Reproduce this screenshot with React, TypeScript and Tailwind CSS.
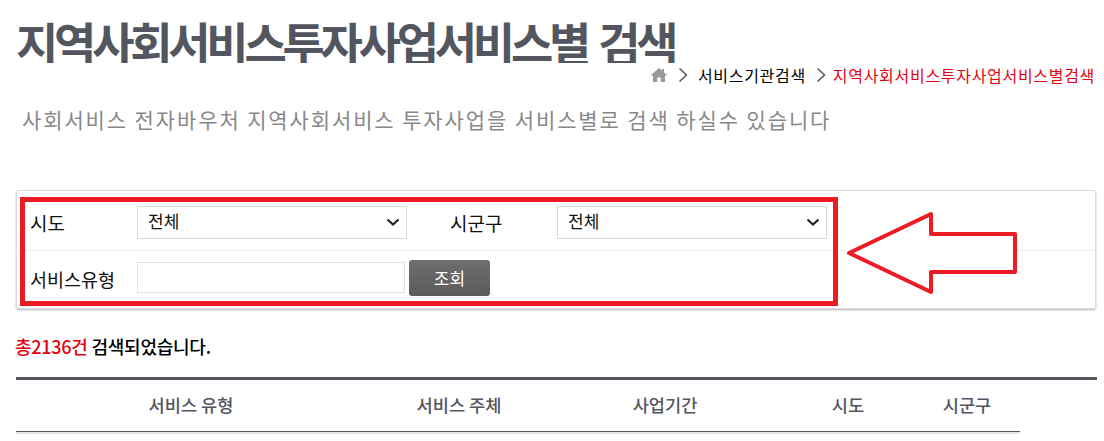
import React from 'react';

const Chevron = () => (
  <svg width="16" height="16" viewBox="0 0 16 16" fill="none" stroke="#222" strokeWidth="2.2" className="shrink-0">
    <path d="M2.5 5.5 8 10.5l5.5-5" />
  </svg>
);

const SelectBox = ({ className }: { className: string }) => (
  <div className={`mt-[1px] flex h-[33px] items-center justify-between border border-[#d8d8d8] bg-white pl-[10px] pr-[5px] text-[17px] text-[#111] ${className}`}>
    <span className="-mt-[2px]">전체</span>
    <Chevron />
  </div>
);

const Sep = () => (
  <svg width="10" height="16" viewBox="0 0 10 16" fill="none" stroke="#555" strokeWidth="1.5">
    <path d="M1.5 1.5 8.5 8l-7 6.5" />
  </svg>
);

export default function App() {
  return (
    <div className="relative h-[441px] w-[1104px] overflow-hidden bg-white font-['Noto_Sans_CJK_KR',sans-serif]">
      <h1 className="ml-[16px] h-[63px] w-[664px] overflow-hidden whitespace-nowrap pt-[8px] text-[46px] font-bold leading-[66px] tracking-[-4.25px] [word-spacing:5px] text-[#53565f]">
        지역사회서비스투자사업서비스별 검색
      </h1>

      <div className="-mt-[1px] flex h-[25px] items-center justify-end pr-[9px] text-[16px] leading-none tracking-[0.7px]">
        <svg width="18" height="16" viewBox="0 0 18 16" fill="#999" className="mr-[10px]">
          <path d="M9 1 0.5 8.5H3V15h4.2v-4.5h3.6V15H15V8.5h2.5L14 5.4V2h-2v1.6z" />
        </svg>
        <Sep />
        <span className="ml-[10px] text-black">서비스기관검색</span>
        <span className="ml-[10px]"><Sep /></span>
        <span className="ml-[7px] text-[#e60012]">지역사회서비스투자사업서비스별검색</span>
      </div>

      <p className="ml-[22px] mt-[17px] h-[30px] whitespace-nowrap text-[21px] leading-[30px] tracking-[1.88px] text-[#888]">
        사회서비스 전자바우처 지역사회서비스 투자사업을 서비스별로 검색 하실수 있습니다
      </p>

      <div className="mx-[16px] mt-[56px] h-[119px] w-[1080px] rounded-[2px] border border-[#dcdcdc] shadow-[0_1px_2px_rgba(0,0,0,0.3)]">
        <div className="flex h-[60px] items-center border-b border-[#eeeeee] pl-[13px] pt-[2px] text-[19px] text-[#111]">
          <span className="mt-[3px] w-[107px]">시도</span>
          <SelectBox className="w-[270px]" />
          <span className="ml-[43px] mt-[3px] w-[107px]">시군구</span>
          <SelectBox className="w-[270px]" />
        </div>
        <div className="flex h-[57px] items-center pl-[13px] text-[18.5px] text-[#111]">
          <span className="w-[107px]">서비스유형</span>
          <div className="-mt-[4px] h-[31px] w-[268px] border border-[#e2e2e2] bg-white" />
          <button className="-mt-[3px] ml-[4px] h-[36px] w-[81px] rounded-[3px] bg-gradient-to-b from-[#6e6e6e] to-[#5c5c5c] text-[17px] text-white">
            조회
          </button>
        </div>
      </div>

      <p className="ml-[15px] mt-[25px] h-[24px] whitespace-nowrap text-[18px] font-medium leading-[24px] tracking-[-0.25px] text-black">
        <span className="text-[#e60012]">총2136건</span> 검색되었습니다.
      </p>

      <div className="mx-[16px] mt-[19px] w-[1081px] border-t-[3px] border-[#53565f]">
        <div className="grid h-[52px] w-[1004px] grid-cols-[350px_186px_226px_140px_98px] items-center border-b border-[#53565f] text-center text-[17.6px] font-medium text-[#53565f]">
          <span>서비스 유형</span>
          <span>서비스 주체</span>
          <span>사업기간</span>
          <span>시도</span>
          <span>시군구</span>
        </div>
        <div className="h-[2px] w-[1004px] bg-[#e5e5e5]" />
      </div>

      <div className="pointer-events-none absolute left-[20px] top-[197px] h-[109px] w-[818px] border-[5px] border-[#ed1c24]" />
      <svg className="pointer-events-none absolute left-[846px] top-[207px]" width="172" height="92" viewBox="0 0 172 92" fill="#fff" stroke="#ed1c24" strokeWidth="4" strokeLinejoin="round">
        <path d="M3 46 85 7v20h84v38H85v20z" />
      </svg>
    </div>
  );
}
